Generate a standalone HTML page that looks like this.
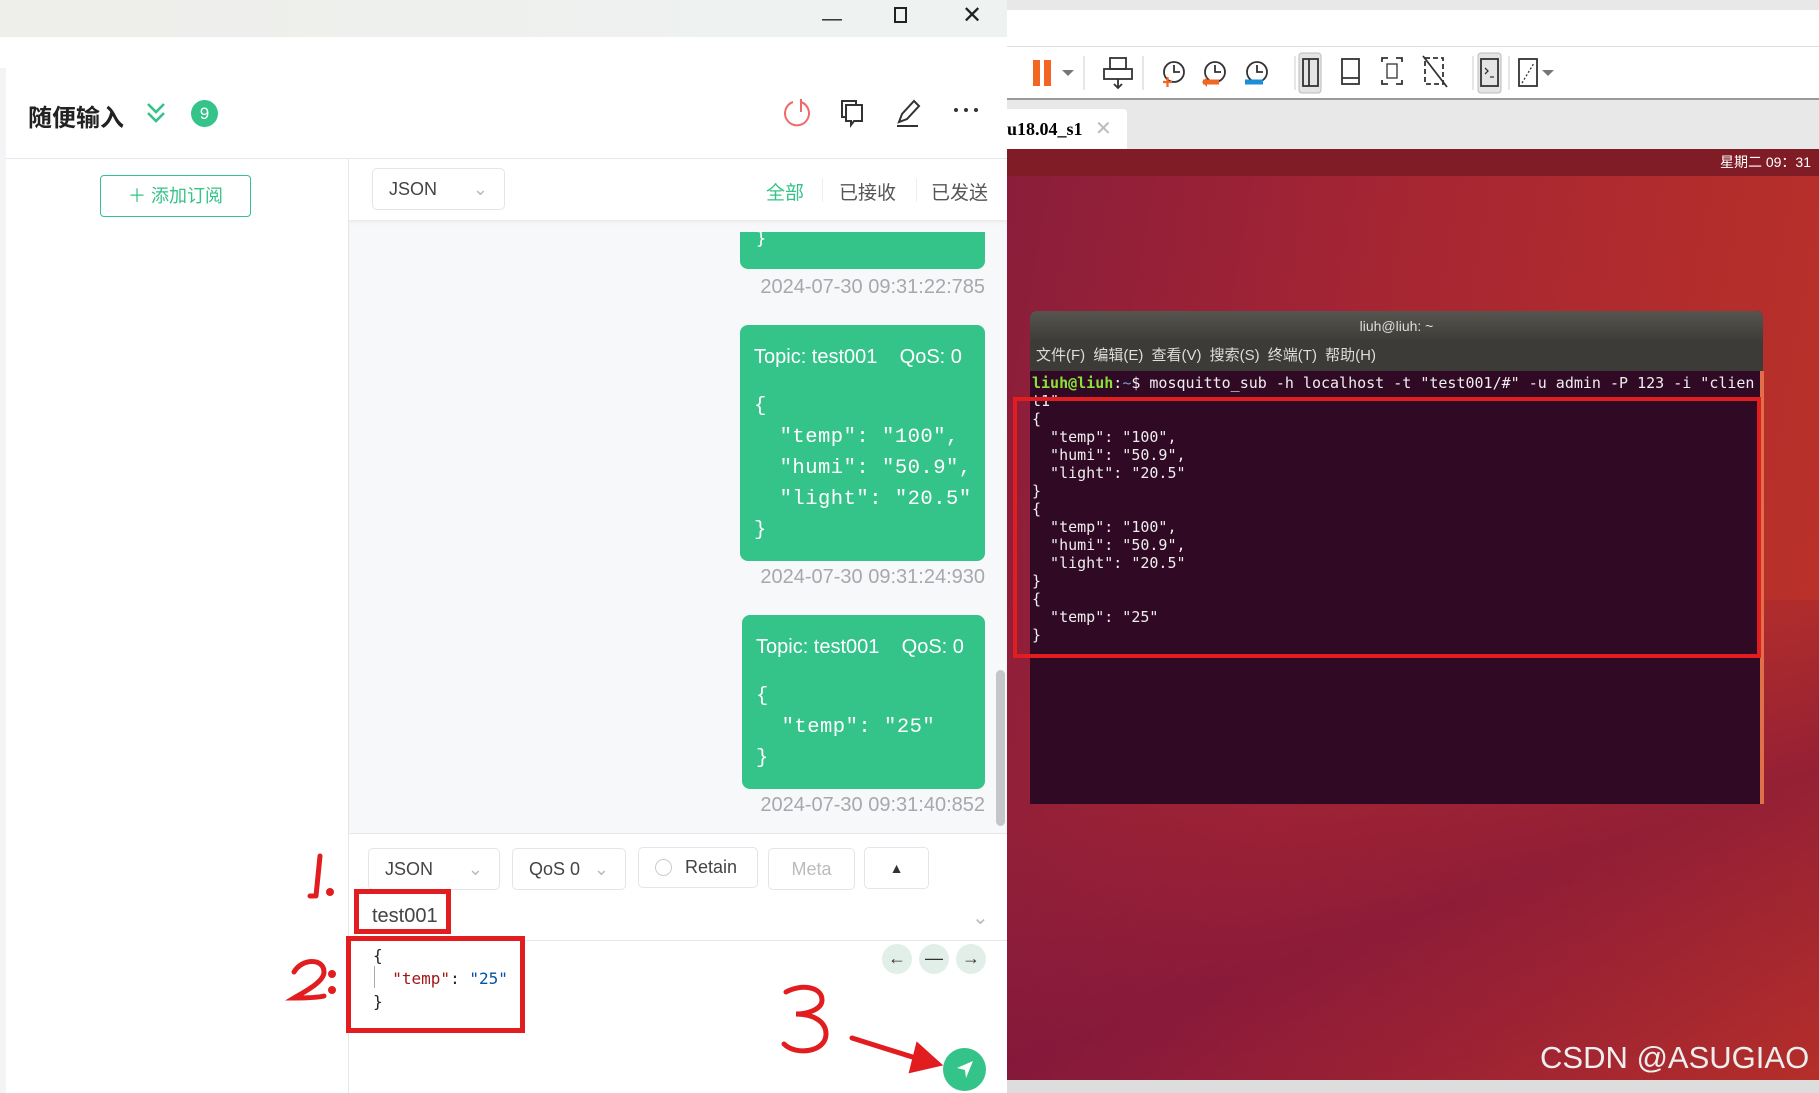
<!DOCTYPE html>
<html><head><meta charset="utf-8"><style>
*{margin:0;padding:0;box-sizing:border-box}
body{width:1819px;height:1093px;overflow:hidden;position:relative;background:#fff;font-family:"Liberation Sans","Noto Sans CJK SC",sans-serif}
.a{position:absolute}
.mono{font-family:"DejaVu Sans Mono","Liberation Mono",monospace}
.bub{background:#34c388;border-radius:8px;color:#fff}
.ts{color:#a5a8ad;font-size:20px;right:0;text-align:right}
.btn{border:1px solid #e3e5ea;border-radius:5px;background:#fff;color:#444;font-size:18px}
.rd{border:5px solid #e21d1f}
.term div{height:18px;line-height:18px;white-space:pre}
.code{font-family:'Liberation Mono',monospace;font-size:20.5px;line-height:31px;white-space:pre}
</style></head><body>
<!-- right VMware side -->
<div class="a" style="left:1007px;top:0;width:812px;height:1093px;background:#e8e8e8"></div>
<div class="a" style="left:1007px;top:10px;width:812px;height:36px;background:#fff"></div>
<div class="a" style="left:1007px;top:46px;width:812px;height:54px;background:#fff;border-top:1px solid #ddd;border-bottom:2px solid #999"></div>
<svg class="a" style="left:1007px;top:46px" width="812" height="54" viewBox="0 0 812 54" fill="none" stroke-width="1.8">
<rect x="26" y="14" width="7" height="26" fill="#f26522" stroke="none"/><rect x="37" y="14" width="7" height="26" fill="#f26522" stroke="none"/>
<path d="M55 24l6 6 6-6z" fill="#777" stroke="none"/>
<line x1="77" y1="10" x2="77" y2="44" stroke="#ccc" stroke-width="1"/>
<rect x="103" y="12" width="16" height="11" stroke="#333"/><rect x="97" y="23" width="28" height="10" stroke="#333"/><path d="M111 33v9M107 38l4 4 4-4" stroke="#333"/>
<line x1="136" y1="10" x2="136" y2="44" stroke="#ccc" stroke-width="1"/>
<circle cx="167" cy="26" r="10" stroke="#333"/><path d="M167 19v7h6" stroke="#333"/><path d="M156 36h9M160.5 31v10" stroke="#f26522" stroke-width="2.2"/>
<circle cx="208" cy="26" r="10" stroke="#333"/><path d="M208 19v7h6" stroke="#333"/><path d="M196 36h16" stroke="#f26522" stroke-width="5"/><path d="M200 31l-5 5 5 5" fill="#f26522" stroke="none"/>
<circle cx="250" cy="26" r="10" stroke="#333"/><path d="M250 19v7h6" stroke="#333"/><path d="M238 36h18" stroke="#1a8fd6" stroke-width="5"/>
<line x1="288" y1="10" x2="288" y2="44" stroke="#ccc" stroke-width="1"/>
<rect x="292" y="7" width="22" height="40" rx="3" fill="#e4e4e4" stroke="#bbb" stroke-width="1"/>
<rect x="296" y="13" width="15" height="27" stroke="#333"/><line x1="302" y1="13" x2="302" y2="40" stroke="#333"/>
<rect x="335" y="13" width="17" height="25" stroke="#333"/><line x1="335" y1="32" x2="352" y2="32" stroke="#333"/>
<path d="M375 16v-4h6M389 12h6v4M395 34v4h-6M381 38h-6v-4" stroke="#333"/><rect x="380" y="18" width="10" height="14" stroke="#333" stroke-width="1.3"/>
<path d="M418 12h18v26h-18z" stroke="#333" stroke-dasharray="5 3"/><line x1="416" y1="10" x2="440" y2="41" stroke="#333"/>
<line x1="466" y1="10" x2="466" y2="44" stroke="#ccc" stroke-width="1"/>
<rect x="471" y="7" width="23" height="40" rx="3" fill="#e4e4e4" stroke="#bbb" stroke-width="1"/><rect x="474" y="13" width="17" height="27" stroke="#333"/><path d="M478 22l3 3-3 3M483 31h4" stroke="#333" stroke-width="1.3"/>
<line x1="502" y1="10" x2="502" y2="44" stroke="#ccc" stroke-width="1"/>
<rect x="512" y="13" width="18" height="27" stroke="#333"/><path d="M515 37l12-20" stroke="#333" stroke-dasharray="2 2" stroke-width="1.3"/>
<path d="M535 24l6 6 6-6z" fill="#777" stroke="none"/>
</svg>
<div class="a" style="left:1007px;top:109px;width:120px;height:40px;background:#fff;border-radius:0 4px 0 0"></div>
<div class="a" style="left:1007px;top:109px;font-family:'Liberation Serif',serif;font-weight:bold;font-size:18px;line-height:40px">u18.04_s1 <span style="color:#bbb;font-weight:normal;font-family:'Liberation Sans';font-size:20px;margin-left:8px">✕</span></div>
<div class="a" style="left:1007px;top:149px;width:812px;height:931px;background:linear-gradient(100deg,#8a1d3b 0%,#a52533 40%,#bd3327 100%)"></div>
<div class="a" style="left:1007px;top:600px;width:812px;height:480px;background:linear-gradient(160deg,rgba(120,20,60,0) 30%,rgba(118,18,62,.55) 60%,rgba(150,30,50,.2) 100%)"></div>
<div class="a" style="left:1007px;top:149px;width:812px;height:27px;background:#801c25;color:#fff;font-size:14px;text-align:right;padding-right:8px;line-height:27px">星期二 09：31</div>
<!-- terminal -->
<div class="a" style="left:1030px;top:311px;width:733px;height:493px;background:#300a24;border-radius:6px 6px 0 0;overflow:hidden">
 <div style="height:30px;background:linear-gradient(#57554f,#3d3c38);color:#ddd;font-size:14px;text-align:center;line-height:30px">liuh@liuh: ~</div>
 <div style="height:30px;background:#3c3b37;color:#ddd;font-size:15px;line-height:30px;padding-left:6px;word-spacing:4px">文件(F) 编辑(E) 查看(V) 搜索(S) 终端(T) 帮助(H)</div>
 <div class="term mono" style="color:#eee;font-size:15px;padding-left:2px;padding-top:3px"><div><span style="color:#8ae234;font-weight:bold">liuh@liuh</span>:<span style="color:#729fcf">~</span>$ mosquitto_sub -h localhost -t "test001/#" -u admin -P 123 -i "clien</div><div>t1"</div><div>{</div><div>  "temp": "100",</div><div>  "humi": "50.9",</div><div>  "light": "20.5"</div><div>}</div><div>{</div><div>  "temp": "100",</div><div>  "humi": "50.9",</div><div>  "light": "20.5"</div><div>}</div><div>{</div><div>  "temp": "25"</div><div>}</div></div>
</div>
<div class="a" style="left:1760px;top:371px;width:4px;height:433px;background:#e0704a"></div>
<div class="a" style="left:1013px;top:397px;width:748px;height:261px;border:4px solid #e21d1f"></div>
<div class="a" style="left:1007px;top:1080px;width:812px;height:13px;background:#ddd"></div>
<div class="a" style="left:1540px;top:1040px;color:#eee;font-size:31px">CSDN @ASUGIAO</div>

<!-- left app -->
<div class="a" style="left:0;top:0;width:1007px;height:37px;background:linear-gradient(90deg,#eeeeea,#eef3f2)"></div>
<div class="a" style="left:822px;top:8px;font-size:20px;color:#222">&#8212;</div>
<div class="a" style="left:894px;top:7px;width:13px;height:16px;border:2px solid #222"></div>
<div class="a" style="left:962px;top:1px;font-size:24px;color:#222">✕</div>
<div class="a" style="left:0;top:37px;width:1007px;height:1056px;background:#fff"></div>
<div class="a" style="left:0;top:68px;width:6px;height:1025px;background:#f3f4f6"></div>
<div class="a" style="left:28px;top:98px;font-size:24px;font-weight:bold;color:#222">随便输入</div>
<svg class="a" style="left:145px;top:101px" width="22" height="24"><path d="M3 3l8 8 8-8M3 12l8 8 8-8" stroke="#34c388" stroke-width="2.6" fill="none"/></svg>
<div class="a" style="left:191px;top:100px;width:27px;height:27px;border-radius:50%;background:#34c388;color:#fff;font-size:17px;text-align:center;line-height:27px">9</div>
<svg class="a" style="left:780px;top:96px" width="220" height="34">
<path d="M13 6a12 12 0 1 0 8 0" stroke="#f06a6a" stroke-width="2" fill="none"/><line x1="21" y1="3" x2="21" y2="16" stroke="#f06a6a" stroke-width="2"/>
<rect x="62" y="5" width="14" height="16" fill="none" stroke="#333" stroke-width="2"/><path d="M66 9h16v16h-8l-3 4v-4h-5z" fill="#fff" stroke="#333" stroke-width="2"/>
<path d="M119 26l3-8 12-13 5 5-12 13z" fill="none" stroke="#333" stroke-width="2"/><line x1="117" y1="30" x2="138" y2="30" stroke="#333" stroke-width="2"/>
<circle cx="176" cy="14" r="2" fill="#333"/><circle cx="186" cy="14" r="2" fill="#333"/><circle cx="196" cy="14" r="2" fill="#333"/>
</svg>
<div class="a" style="left:6px;top:158px;width:1001px;height:1px;background:#e6e7ec"></div>
<div class="a" style="left:348px;top:158px;width:1px;height:935px;background:#e6e7ec"></div>
<div class="a" style="left:100px;top:175px;width:151px;height:42px;border:1px solid #34c388;border-radius:4px;color:#34c388;font-size:18px;text-align:center;line-height:40px">＋ 添加订阅</div>
<div class="a btn" style="left:372px;top:168px;width:133px;height:42px;line-height:40px;padding-left:16px">JSON<span style="position:absolute;right:16px;color:#bbb">&#8964;</span></div>
<div class="a" style="left:766px;top:178px;font-size:19px;color:#34c388">全部</div>
<div class="a" style="left:822px;top:178px;width:1px;height:24px;background:#eee"></div>
<div class="a" style="left:839px;top:178px;font-size:19px;color:#555">已接收</div>
<div class="a" style="left:916px;top:178px;width:1px;height:24px;background:#eee"></div>
<div class="a" style="left:931px;top:178px;font-size:19px;color:#555">已发送</div>
<!-- messages -->
<div class="a" style="left:349px;top:220px;width:658px;height:613px;background:#f7f8fa;box-shadow:inset 0 4px 6px -4px #ddd"></div>
<div class="a bub mono" style="left:740px;top:232px;width:245px;height:37px;border-radius:0 0 8px 8px;font-size:17px;padding-left:16px;line-height:14px">}</div>
<div class="a ts" style="left:700px;top:276px;width:285px">2024-07-30 09:31:22:785</div>
<div class="a bub" style="left:740px;top:325px;width:245px;height:236px;padding:21px 14px">
<div style="font-size:20px">Topic: test001&nbsp;&nbsp;&nbsp;&nbsp;QoS: 0</div>
<div class="code" style="margin-top:22px;letter-spacing:0.5px">{
  "temp": "100",
  "humi": "50.9",
  "light": "20.5"
}</div></div>
<div class="a ts" style="left:700px;top:566px;width:285px">2024-07-30 09:31:24:930</div>
<div class="a bub" style="left:742px;top:615px;width:243px;height:174px;padding:21px 14px">
<div style="font-size:20px">Topic: test001&nbsp;&nbsp;&nbsp;&nbsp;QoS: 0</div>
<div class="code" style="margin-top:22px;letter-spacing:0.5px">{
  "temp": "25"
}</div></div>
<div class="a ts" style="left:700px;top:794px;width:285px">2024-07-30 09:31:40:852</div>
<div class="a" style="left:996px;top:670px;width:9px;height:156px;border-radius:5px;background:#c4c6ca"></div>
<!-- bottom -->
<div class="a" style="left:349px;top:833px;width:658px;height:1px;background:#e6e7ec"></div>
<div class="a btn" style="left:368px;top:848px;width:132px;height:42px;line-height:40px;padding-left:16px">JSON<span style="position:absolute;right:16px;color:#bbb">&#8964;</span></div>
<div class="a btn" style="left:512px;top:848px;width:114px;height:42px;line-height:40px;padding-left:16px">QoS 0<span style="position:absolute;right:16px;color:#bbb">&#8964;</span></div>
<div class="a btn" style="left:638px;top:847px;width:120px;height:41px;line-height:39px;padding-left:46px">Retain<span style="position:absolute;left:16px;top:11px;width:17px;height:17px;border:1px solid #ccc;border-radius:50%"></span></div>
<div class="a btn" style="left:768px;top:848px;width:87px;height:42px;line-height:40px;text-align:center;color:#bbb">Meta</div>
<div class="a btn" style="left:864px;top:847px;width:65px;height:42px;line-height:40px;text-align:center;font-size:14px;color:#333">▲</div>
<div class="a" style="left:372px;top:905px;font-size:20px;color:#444">test001</div>
<div class="a" style="left:972px;top:905px;color:#bbb;font-size:20px">&#8964;</div>
<div class="a" style="left:349px;top:940px;width:658px;height:1px;background:#e6e7ec"></div>
<div class="a mono" style="left:373px;top:944px;font-size:16px;line-height:23px;white-space:pre;color:#222">{
  <span style="color:#a31515">"temp"</span>: <span style="color:#0451a5">"25"</span>
}</div>
<div class="a" style="left:374px;top:966px;width:1px;height:22px;background:#aaa"></div>
<div class="a" style="left:882px;top:944px;width:30px;height:30px;border-radius:50%;background:#e2efe8;color:#333;text-align:center;line-height:28px;font-size:18px">←</div>
<div class="a" style="left:919px;top:944px;width:30px;height:30px;border-radius:50%;background:#e2efe8;color:#333;text-align:center;line-height:28px;font-size:18px">—</div>
<div class="a" style="left:956px;top:944px;width:30px;height:30px;border-radius:50%;background:#e2efe8;color:#333;text-align:center;line-height:28px;font-size:18px">→</div>
<div class="a" style="left:943px;top:1048px;width:43px;height:43px;border-radius:50%;background:#34c388"></div>
<svg class="a" style="left:954px;top:1058px" width="22" height="24"><path d="M3 10L19 3 12 20 11 12z" fill="#fff"/></svg>
<!-- annotations -->
<div class="a rd" style="left:354px;top:889px;width:97px;height:45px"></div>
<div class="a rd" style="left:346px;top:936px;width:179px;height:97px"></div>
<svg class="a" style="left:280px;top:850px" width="700" height="243" fill="none" stroke="#e21d1f" stroke-width="5" stroke-linecap="round">
<path d="M40 6l-4 40M30 46h4"/><circle cx="50" cy="42" r="1.5" fill="#e21d1f"/>
<path d="M14 122c8-14 30-14 30 0 0 10-20 20-30 26 10 0 22 0 30-2"/><circle cx="52" cy="124" r="1.5" fill="#e21d1f"/><circle cx="52" cy="140" r="1.5" fill="#e21d1f"/>
<path d="M506 142c14-8 36-6 36 8 0 10-16 14-26 14 18 0 30 8 30 20 0 18-30 22-42 10"/>
<path d="M572 188l70 22"/><path d="M638 196l20 18-26 6z" fill="#e21d1f"/>
</svg>
</body></html>
